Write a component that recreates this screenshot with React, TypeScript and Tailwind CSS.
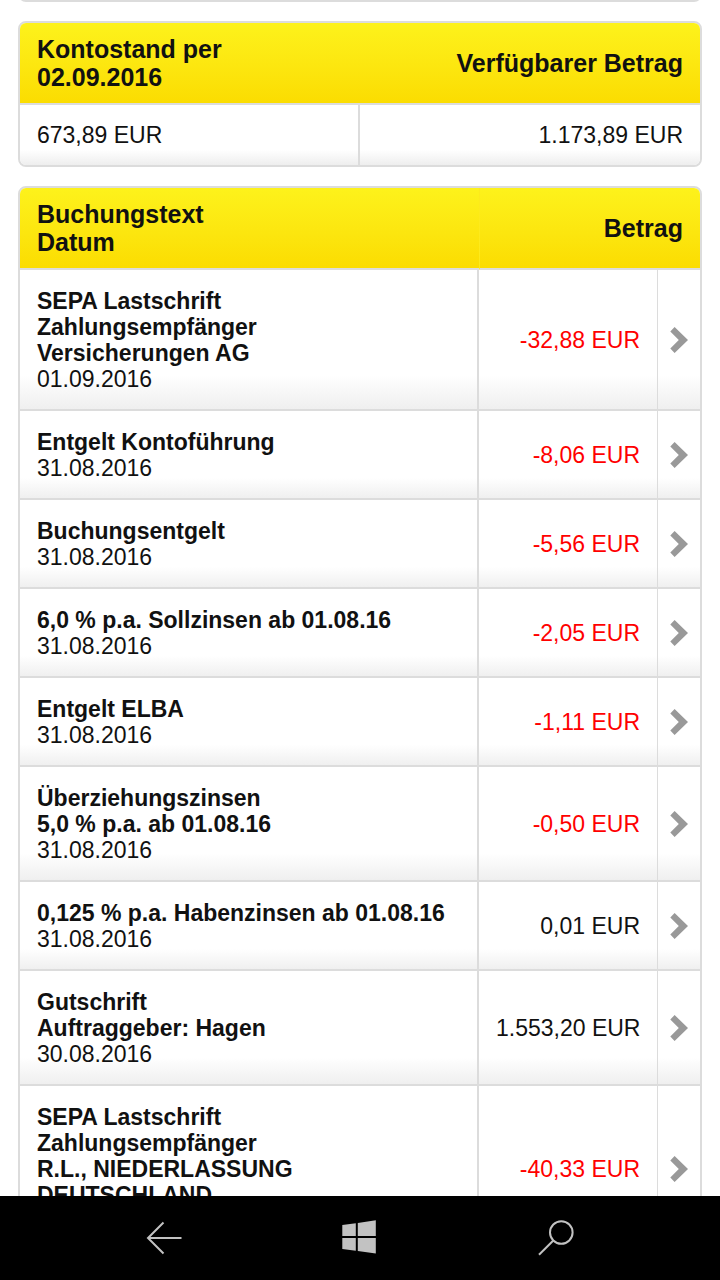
type Booking = {
  title: string[];
  date: string;
  amount: string;
  debit: boolean;
};

const bookings: Booking[] = [
  { title: ["SEPA Lastschrift", "Zahlungsempfänger", "Versicherungen AG"], date: "01.09.2016", amount: "-32,88 EUR", debit: true },
  { title: ["Entgelt Kontoführung"], date: "31.08.2016", amount: "-8,06 EUR", debit: true },
  { title: ["Buchungsentgelt"], date: "31.08.2016", amount: "-5,56 EUR", debit: true },
  { title: ["6,0 % p.a. Sollzinsen ab 01.08.16"], date: "31.08.2016", amount: "-2,05 EUR", debit: true },
  { title: ["Entgelt ELBA"], date: "31.08.2016", amount: "-1,11 EUR", debit: true },
  { title: ["Überziehungszinsen", "5,0 % p.a. ab 01.08.16"], date: "31.08.2016", amount: "-0,50 EUR", debit: true },
  { title: ["0,125 % p.a. Habenzinsen ab 01.08.16"], date: "31.08.2016", amount: "0,01 EUR", debit: false },
  { title: ["Gutschrift", "Auftraggeber: Hagen"], date: "30.08.2016", amount: "1.553,20 EUR", debit: false },
  { title: ["SEPA Lastschrift", "Zahlungsempfänger", "R.L., NIEDERLASSUNG", "DEUTSCHLAND"], date: "30.08.2016", amount: "-40,33 EUR", debit: true },
];

const card = "overflow-hidden rounded-lg border-2 border-[#dcdcdc]";
const table = "w-full table-fixed border-separate border-spacing-0";
const headRow = "bg-linear-to-b from-[#fdf21b] to-[#fbdc00] text-[25px] leading-7";
const headCell = "border-b-2 border-[#dcdcdc] px-[17px] py-3 font-bold";
const bodyRow =
  "bg-linear-to-b from-white from-75% to-[#eeeeee] text-[23px] leading-[26px]";

function Chevron() {
  return (
    <svg className="h-[26px] w-[18px]" viewBox="0 0 18 26" fill="#999999" aria-hidden="true">
      <path d="M0.3 4.6 L4.6 0 L18 13 L4.6 26 L0.3 21.4 L8.8 13 Z" />
    </svg>
  );
}

function Balance() {
  return (
    <section className={card}>
      <table className={table}>
        <thead>
          <tr className={headRow}>
            <th scope="col" className={`${headCell} w-1/2 text-left`}>
              Kontostand per
              <br />
              02.09.2016
            </th>
            <th scope="col" className={`${headCell} text-right`}>
              Verfügbarer Betrag
            </th>
          </tr>
        </thead>
        <tbody>
          <tr className={bodyRow}>
            <td className="border-r-2 border-[#dcdcdc] px-[17px] py-[17px]">673,89 EUR</td>
            <td className="px-[17px] py-[17px] text-right">1.173,89 EUR</td>
          </tr>
        </tbody>
      </table>
    </section>
  );
}

function Bookings() {
  return (
    <section className={card}>
      <table className={table}>
        <colgroup>
          <col className="w-[67.5%]" />
          <col />
          <col className="w-[42px]" />
        </colgroup>
        <thead>
          <tr className={headRow}>
            <th scope="col" className={`${headCell} text-left`}>
              Buchungstext
              <br />
              Datum
            </th>
            <th scope="col" colSpan={2} className={`${headCell} border-l border-l-[#fdea1c] text-right`}>
              Betrag
            </th>
          </tr>
        </thead>
        <tbody>
          {bookings.map((b, i) => (
            <tr key={i} className={bodyRow}>
              <td className="border-r-2 border-b-2 border-[#dcdcdc] px-[17px] pt-[18px] pb-[17px]">
                {b.title.map((line) => (
                  <strong key={line} className="block font-bold">
                    {line}
                  </strong>
                ))}
                {b.date}
              </td>
              <td
                className={`border-r border-b-2 border-[#dcdcdc] px-[17px] text-right whitespace-nowrap ${
                  b.debit ? "text-[#ff0000]" : ""
                }`}
              >
                {b.amount}
              </td>
              <td className="border-b-2 border-[#dcdcdc]">
                <a href="#details" aria-label="Details anzeigen" className="flex justify-center">
                  <Chevron />
                </a>
              </td>
            </tr>
          ))}
        </tbody>
      </table>
    </section>
  );
}

function SystemBar() {
  const button = "flex h-full w-[196px] items-center justify-center";
  return (
    <nav className="flex h-21 shrink-0 justify-center bg-black text-[#c2c2c2]">
      <button type="button" aria-label="Zurück" className={button}>
        <svg className="size-9" viewBox="0 0 36 36" fill="none" stroke="currentColor" strokeWidth="2" aria-hidden="true">
          <path d="M35.5 18 H2 M17.5 2.5 L2 18 L17.5 33.5" />
        </svg>
      </button>
      <button type="button" aria-label="Start" className={button}>
        <svg className="size-9" viewBox="0 0 36 36" fill="currentColor" aria-hidden="true">
          <path d="M0.3 5 L13.8 3.2 V16 H0.3 Z M15.8 2.9 L33.8 0.3 V16 H15.8 Z M0.3 18 H13.8 V30.7 L0.3 28.9 Z M15.8 18 H33.8 V33.5 L15.8 31 Z" />
        </svg>
      </button>
      <button type="button" aria-label="Suchen" className={button}>
        <svg className="size-9" viewBox="0 0 36 36" fill="none" stroke="currentColor" strokeWidth="2" aria-hidden="true">
          <circle cx="23.3" cy="12.5" r="11.3" />
          <path d="M15.3 20.5 L1 34.8" />
        </svg>
      </button>
    </nav>
  );
}

export default function App() {
  return (
    <div className="flex h-screen flex-col bg-white font-['Liberation_Sans',Arial,sans-serif] text-[#111111]">
      <main className="flex min-h-0 flex-1 flex-col gap-[19px] overflow-y-auto px-[18px] [scrollbar-width:none] [&>*]:shrink-0">
        <div className="-mt-1.5 h-2 rounded-b-lg border-x-2 border-b-2 border-[#dcdcdc] bg-[#eeeeee]" />
        <Balance />
        <Bookings />
      </main>
      <SystemBar />
    </div>
  );
}
